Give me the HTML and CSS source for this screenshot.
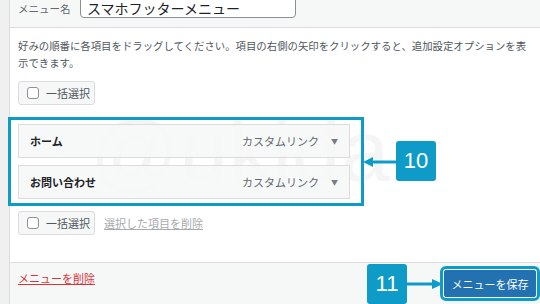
FILE: index.html
```html
<!DOCTYPE html>
<html lang="ja">
<head>
    <meta charset="UTF-8">
    <meta name="viewport" content="width=device-width, initial-scale=1.0">
    <title>メニュー編集</title>
    <link rel="stylesheet" href="styles.css">
</head>
<body>
    <div class="panel">
        <div class="menu-header">
            <label class="name-label">メニュー名</label>
            <input class="name-input" type="text" value="スマホフッターメニュー">
        </div>

        <div class="menu-body">
            <p class="drag-hint">好みの順番に各項目をドラッグしてください。項目の右側の矢印をクリックすると、追加設定オプションを表示できます。</p>

            <div class="bulk-row">
                <label class="bulk-btn"><span class="check"></span>一括選択</label>
            </div>

            <div class="menu-list">
                <div class="watermark">@ukida</div>
                <div class="menu-item">
                    <span class="item-title">ホーム</span>
                    <span class="item-type">カスタムリンク</span>
                    <span class="item-arrow">▼</span>
                </div>
                <div class="menu-item">
                    <span class="item-title">お問い合わせ</span>
                    <span class="item-type">カスタムリンク</span>
                    <span class="item-arrow">▼</span>
                </div>

                <!-- 注釈 10 -->
                <div class="note-box note-list"></div>
                <svg class="note-arrow arrow-10" width="34" height="12" viewBox="0 0 34 12">
                    <line x1="8" y1="6" x2="34" y2="6" stroke="#0f9bc8" stroke-width="3"/>
                    <polygon points="0,6 10,1 10,11" fill="#0f9bc8"/>
                </svg>
                <div class="badge badge-10">10</div>
            </div>

            <div class="bulk-row bulk-bottom">
                <label class="bulk-btn"><span class="check"></span>一括選択</label>
                <a class="remove-selected">選択した項目を削除</a>
            </div>
        </div>

        <div class="menu-footer">
            <a class="delete-menu">メニューを削除</a>
            <div class="save-wrap">
                <button class="save-btn">メニューを保存</button>
                <svg class="note-arrow arrow-11" width="36" height="12" viewBox="0 0 36 12">
                    <line x1="0" y1="6" x2="27" y2="6" stroke="#0f9bc8" stroke-width="3"/>
                    <polygon points="36,6 25,1 25,11" fill="#0f9bc8"/>
                </svg>
                <div class="badge badge-11">11</div>
            </div>
        </div>
    </div>
</body>
</html>
```

FILE: styles.css
```css
* {
    box-sizing: border-box;
}
body {
    margin: 0;
    background: #f0f0f1;
    font-family: "Noto Sans CJK JP", "Liberation Sans", sans-serif;
    color: #3c434a;
    overflow: hidden;
}
.panel {
    margin-left: 9px;
    border-left: 1px solid #dcdcde;
    background: #fff;
    height: 304px;
}
.menu-header {
    height: 28px;
    background: #f6f7f7;
    border-bottom: 1px solid #dcdcde;
    display: flex;
    align-items: flex-end;
    padding: 0 8px 8px;
    position: relative;
}
.name-label {
    font-size: 10.5px;
    color: #646970;
    line-height: 14px;
    margin-bottom: 3px;
}
.name-input {
    position: absolute;
    left: 70px;
    top: -12px;
    width: 216px;
    height: 30px;
    border: 1px solid #8c8f94;
    border-radius: 4px;
    padding: 10px 6px 0;
    font-family: inherit;
    font-size: 14px;
    color: #1d2327;
}
.menu-body {
    height: 234px;
    padding: 9px 8px 0;
}
.drag-hint {
    margin: 0;
    font-size: 10.4px;
    line-height: 17px;
    color: #50575e;
}
.bulk-row {
    display: flex;
    align-items: center;
    margin-top: 10px;
}
.bulk-btn {
    display: flex;
    align-items: center;
    width: 77px;
    height: 24px;
    background: #f6f7f7;
    border: 1px solid #dcdcde;
    border-radius: 3px;
    padding-left: 8px;
    font-size: 11px;
    color: #50575e;
}
.check {
    width: 12px;
    height: 12px;
    border: 1px solid #8c8f94;
    border-radius: 3px;
    background: #fff;
    margin-right: 7px;
}
.menu-list {
    position: relative;
    margin-top: 19px;
    width: 332px;
}
.watermark {
    position: absolute;
    left: 72px;
    top: -24px;
    font-family: "Liberation Sans", sans-serif;
    font-size: 88px;
    color: rgba(0, 0, 0, 0.04);
    white-space: nowrap;
}
.menu-item {
    position: relative;
    display: flex;
    align-items: center;
    height: 34px;
    margin-bottom: 7px;
    background: rgba(246, 247, 247, 0.85);
    border: 1px solid #dcdcde;
    padding: 0 11px 0 11px;
}
.item-title {
    flex: 1;
    font-size: 11px;
    font-weight: bold;
    color: #1d2327;
}
.item-type {
    font-size: 11px;
    color: #646970;
}
.item-arrow {
    font-size: 7px;
    color: #787c82;
    margin-left: 12px;
}
.bulk-bottom {
    margin-top: 12px;
}
.remove-selected {
    margin-left: 9px;
    font-size: 11px;
    color: #a7aaad;
    text-decoration: underline;
}
.menu-footer {
    display: flex;
    align-items: center;
    justify-content: space-between;
    height: 42px;
    background: #f6f7f7;
    border-top: 1px solid #dcdcde;
    padding: 0 4px 2px 8px;
}
.delete-menu {
    font-size: 11px;
    color: #d63638;
    text-decoration: underline;
    margin-top: -10px;
}
.save-wrap {
    position: relative;
    margin-top: 2px;
}
.save-btn {
    height: 27px;
    width: 92px;
    background: #2271b1;
    border: 1px solid #2271b1;
    border-radius: 2px;
    color: #fff;
    font-family: inherit;
    font-size: 11px;
    outline: 3px solid #0f9bc8;
    outline-offset: 1px;
}

/* 注釈 */
.note-box {
    position: absolute;
    border: 3px solid #0f9bc8;
}
.note-list {
    left: -10px;
    top: -7px;
    width: 356px;
    height: 89px;
}
.badge {
    position: absolute;
    width: 40px;
    height: 40px;
    background: #0f9bc8;
    border-radius: 3px;
    color: #fff;
    font-family: "Liberation Sans", sans-serif;
    font-size: 22px;
    line-height: 40px;
    text-align: center;
}
.badge-10 {
    left: 378px;
    top: 17px;
}
.badge-11 {
    left: -77px;
    top: -6px;
}
.note-arrow {
    position: absolute;
}
.arrow-10 {
    left: 345px;
    top: 32px;
}
.arrow-11 {
    left: -37px;
    top: 8px;
}
```
